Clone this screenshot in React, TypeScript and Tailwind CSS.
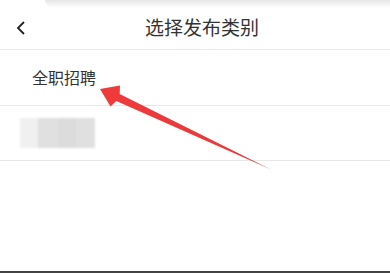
import React from "react";

export default function App() {
  return (
    <div
      className="relative w-[390px] h-[273px] bg-white overflow-hidden"
      style={{ fontFamily: '"Noto Sans CJK SC", "Noto Sans", sans-serif' }}
    >
      <div className="h-[8px] ml-[45px] bg-gradient-to-b from-[#e6e6e6] to-white rounded-bl-[10px]" />
      <div className="relative h-[42px] flex items-center justify-center border-b border-[#e8e8e8]">
        <svg className="absolute left-[14px] top-[12px]" width="14" height="16" viewBox="0 0 14 16">
          <path d="M10 2 L4 8 L10 14" fill="none" stroke="#222" strokeWidth="1.8" />
        </svg>
        <span className="text-[19px] text-[#333] leading-none -mt-[5px] ml-[14px]">选择发布类别</span>
      </div>
      <div className="h-[56px] flex items-center pl-[32px] border-b border-[#e8e8e8]">
        <span className="text-[16px] text-[#333] leading-none -mt-[2px]">全职招聘</span>
      </div>
      <div className="h-[55px] flex items-center pl-[20px] border-b border-[#e8e8e8]">
        <div className="flex h-[30px] blur-[1px]">
          <div className="w-[18px] bg-[#f0f0f0]" />
          <div className="w-[20px] bg-[#e0e0e0]" />
          <div className="w-[18px] bg-[#dcdcdc]" />
          <div className="w-[19px] bg-[#e0e0e0]" />
        </div>
      </div>
      <div className="absolute left-0 right-0 bottom-0 h-[2px] bg-[#444]" />
      <svg className="absolute left-0 top-0" width="390" height="273" viewBox="0 0 390 273">
        <defs>
          <linearGradient id="g" x1="100" y1="88" x2="272" y2="170" gradientUnits="userSpaceOnUse">
            <stop offset="0" stopColor="#f03a3a" />
            <stop offset="0.85" stopColor="#e53a3a" />
            <stop offset="1" stopColor="#9a8a8a" />
          </linearGradient>
        </defs>
        <path
          d="M100 89 L120 85.5 L119.7 93.9 L272 170 L116.3 101.1 L110.5 106.5 Z"
          fill="url(#g)"
        />
      </svg>
    </div>
  );
}
